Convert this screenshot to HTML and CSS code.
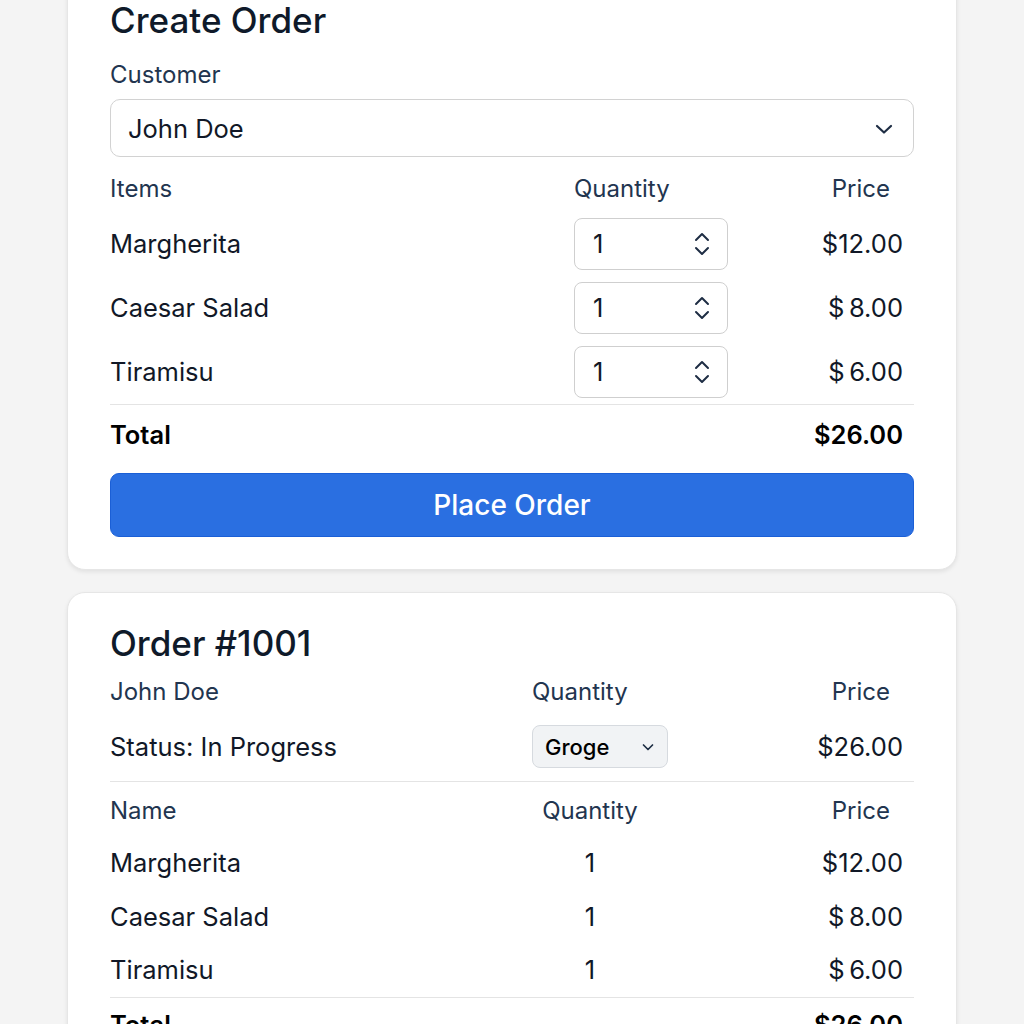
FILE: index.html
```html
<!DOCTYPE html>
<html lang="en">
<head>
<meta charset="utf-8">
<title>Orders</title>
<link rel="stylesheet" href="styles.css">
</head>
<body>
<main class="page">
  <section class="card card-create">
    <h1 class="title">Create Order</h1>
    <div class="label label-customer">Customer</div>
    <div class="select">
      <span>John Doe</span>
      <svg class="chev" width="18" height="12" viewBox="0 0 18 12"><polyline points="2,3 9,9.5 16,3" fill="none" stroke="#1e2d44" stroke-width="2.2" stroke-linecap="round" stroke-linejoin="round"/></svg>
    </div>
    <div class="items-head">
      <span class="label">Items</span>
      <span class="label">Quantity</span>
      <span class="label price-head">Price</span>
    </div>
    <div class="items">
      <div class="item">
        <span class="name">Margherita</span>
        <div class="qty"><span>1</span>
          <svg class="spin" width="18" height="30" viewBox="0 0 18 30"><polyline points="3,11 9,5 15,11" fill="none" stroke="#1e2d44" stroke-width="2" stroke-linecap="round" stroke-linejoin="round"/><polyline points="3,19 9,25 15,19" fill="none" stroke="#1e2d44" stroke-width="2" stroke-linecap="round" stroke-linejoin="round"/></svg>
        </div>
        <span class="price">$12.00</span>
      </div>
      <div class="item">
        <span class="name">Caesar Salad</span>
        <div class="qty"><span>1</span>
          <svg class="spin" width="18" height="30" viewBox="0 0 18 30"><polyline points="3,11 9,5 15,11" fill="none" stroke="#1e2d44" stroke-width="2" stroke-linecap="round" stroke-linejoin="round"/><polyline points="3,19 9,25 15,19" fill="none" stroke="#1e2d44" stroke-width="2" stroke-linecap="round" stroke-linejoin="round"/></svg>
        </div>
        <span class="price">$&#8201;8.00</span>
      </div>
      <div class="item">
        <span class="name">Tiramisu</span>
        <div class="qty"><span>1</span>
          <svg class="spin" width="18" height="30" viewBox="0 0 18 30"><polyline points="3,11 9,5 15,11" fill="none" stroke="#1e2d44" stroke-width="2" stroke-linecap="round" stroke-linejoin="round"/><polyline points="3,19 9,25 15,19" fill="none" stroke="#1e2d44" stroke-width="2" stroke-linecap="round" stroke-linejoin="round"/></svg>
        </div>
        <span class="price">$&#8201;6.00</span>
      </div>
    </div>
    <div class="total">
      <span>Total</span>
      <span>$26.00</span>
    </div>
    <button class="btn">Place Order</button>
  </section>

  <section class="card card-order">
    <h2 class="title">Order #1001</h2>
    <div class="order-head">
      <span class="label">John Doe</span>
      <span class="label">Quantity</span>
      <span class="label price-head">Price</span>
    </div>
    <div class="order-status">
      <span class="name">Status: In Progress</span>
      <div class="status-select"><span>Groge</span>
        <svg width="14" height="10" viewBox="0 0 14 10"><polyline points="2.5,3 7,7.5 11.5,3" fill="none" stroke="#1e2d44" stroke-width="1.7" stroke-linecap="round" stroke-linejoin="round"/></svg>
      </div>
      <span class="price">$26.00</span>
    </div>
    <div class="list-head">
      <span class="label">Name</span>
      <span class="label center">Quantity</span>
      <span class="label price-head">Price</span>
    </div>
    <div class="list">
      <div class="list-row"><span class="name">Margherita</span><span class="center">1</span><span class="price">$12.00</span></div>
      <div class="list-row"><span class="name">Caesar Salad</span><span class="center">1</span><span class="price">$&#8201;8.00</span></div>
      <div class="list-row"><span class="name">Tiramisu</span><span class="center">1</span><span class="price">$&#8201;6.00</span></div>
    </div>
    <div class="total total-order">
      <span>Total</span>
      <span>$26.00</span>
    </div>
  </section>
</main>
</body>
</html>
```

FILE: styles.css
```css
* { box-sizing: border-box; }
html, body { margin: 0; padding: 0; }
body {
  background: #f4f4f4;
  font-family: Inter, "Noto Sans", "Liberation Sans", sans-serif;
  color: #111827;
  font-size: 25.5px;
  line-height: 28px;
}
.page {
  width: 890px;
  margin: -31px auto 0;
  display: flex;
  flex-direction: column;
  gap: 22px;
}
.card {
  background: #fff;
  border: 1px solid #e6e6e6;
  border-radius: 18px;
  box-shadow: 0 2px 4px rgba(0,0,0,0.08);
  padding: 31px 42px 32px;
}
.title {
  margin: 0;
  font-size: 35px;
  line-height: 38px;
  font-weight: 500;
  color: #0f1a2a;
}
.label { color: #22354f; font-size: 24px; }
.label-customer { margin-top: 22px; }
.select {
  margin-top: 10px;
  height: 58px;
  border: 1px solid #d2d2d2;
  border-radius: 10px;
  display: flex;
  align-items: center;
  justify-content: space-between;
  padding: 2px 20px 0 17px;
}
.items-head, .item {
  display: grid;
  grid-template-columns: 464px 154px 1fr;
  align-items: center;
}
.items-head { margin-top: 18px; }
.price-head { text-align: right; padding-right: 24px; }
.price { text-align: right; padding-right: 11px; }
.items {
  margin-top: 15px;
  display: flex;
  flex-direction: column;
  gap: 12px;
  padding-bottom: 6px;
  border-bottom: 1px solid #e4e4e4;
}
.qty {
  height: 52px;
  border: 1px solid #cfcfcf;
  border-radius: 8px;
  display: flex;
  align-items: center;
  justify-content: space-between;
  padding: 0 16px 0 18px;
}
.spin { display: block; }
.total {
  display: flex;
  justify-content: space-between;
  font-weight: 600;
  margin-top: 16px;
  padding-right: 11px;
  color: #000;
}
.btn {
  display: block;
  width: 100%;
  margin-top: 24px;
  height: 64px;
  border: 1px solid #1b5fd6;
  border-radius: 9px;
  background: #2a6fe1;
  color: #fff;
  font-family: inherit;
  font-size: 28px;
  font-weight: 500;
}
.order-head, .order-status {
  display: grid;
  grid-template-columns: 422px 136px 1fr;
  align-items: center;
}
.order-head { margin-top: 16px; }
.order-status {
  margin-top: 19px;
  padding-bottom: 13px;
  border-bottom: 1px solid #e4e4e4;
}
.status-select {
  height: 43px;
  background: #f1f3f5;
  border: 1px solid #d6dadf;
  border-radius: 8px;
  display: flex;
  align-items: center;
  justify-content: space-between;
  padding: 0 12px 0 12px;
  font-size: 22px;
  font-weight: 500;
  color: #000;
}
.list-head, .list-row {
  display: grid;
  grid-template-columns: 430px 100px 1fr;
  align-items: center;
}
.center { text-align: center; }
.list-head { margin-top: 15px; }
.list {
  margin-top: 24px;
  display: flex;
  flex-direction: column;
  gap: 25.5px;
  padding-bottom: 13px;
  border-bottom: 1px solid #e4e4e4;
}
.total-order { margin-top: 13px; }
```
